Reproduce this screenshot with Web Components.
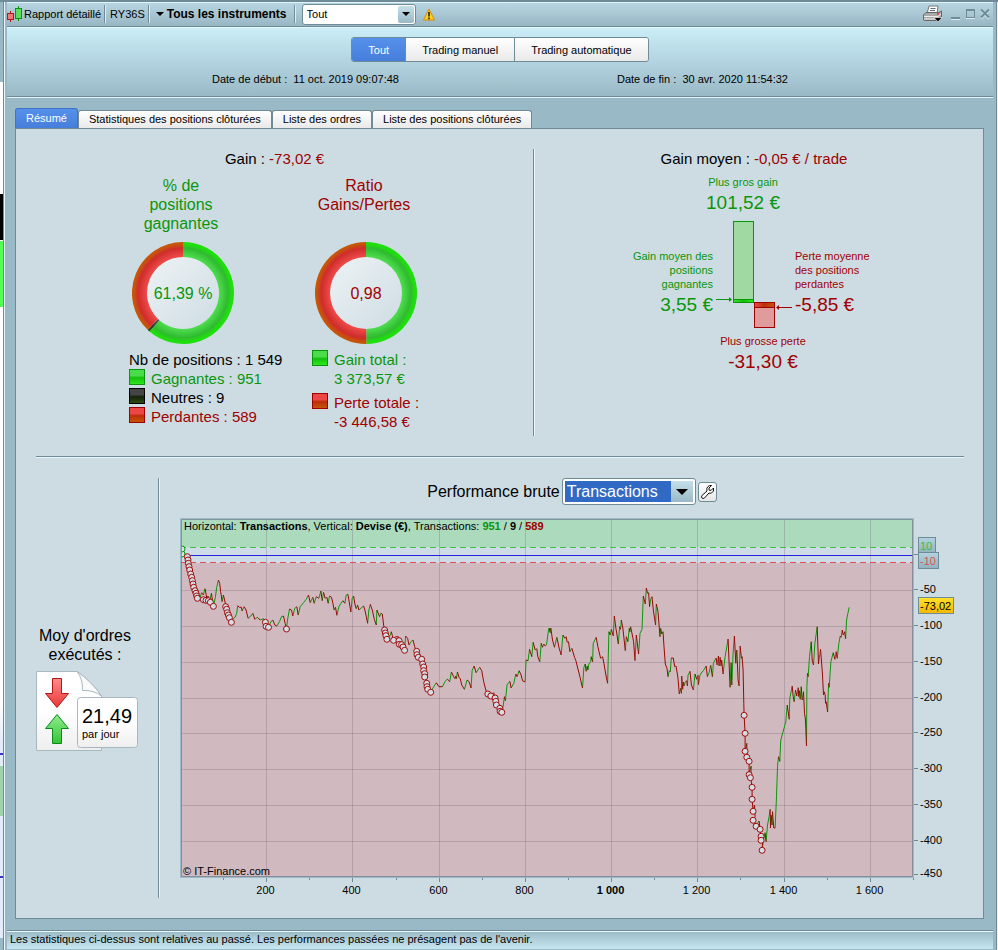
<!DOCTYPE html>
<html lang="fr">
<head>
<meta charset="utf-8">
<title>Rapport détaillé</title>
<style>
:root{
  --line:#6f8b98; --frame:#9ab9c6; --panel:#cddce3; --green:#0a960a; --red:#a00000;
  --small:11px; --medium:15px; --head:16px; --large:19px;
}
body{margin:0;font:11px/14px "Liberation Sans",Arial,sans-serif;color:#000;background:#fff}
</style>
</head>
<body>
<report-window>
  <title-bar slot="bar"></title-bar>
  <report-header slot="header"></report-header>
  <tab-strip slot="tabs"></tab-strip>
  <report-panel slot="content">
    <gain-summary slot="left"></gain-summary>
    <average-gain slot="right"></average-gain>
    <order-rate slot="orders"></order-rate>
    <performance-view slot="chart"></performance-view>
  </report-panel>
  <span slot="status">Les statistiques ci-dessus sont relatives au passé. Les performances passées ne présagent pas de l'avenir.</span>
</report-window>

<script>
const define = (name, html, after) => {
  const template = document.createElement('template');
  template.innerHTML = '<style>*{box-sizing:border-box}:host{display:block}button,select{font:inherit;color:inherit;margin:0;border-radius:0}</style>' + html;
  customElements.define(name, class extends HTMLElement {
    constructor() {
      super();
      this.attachShadow({mode: 'open'}).append(template.content.cloneNode(true));
    }
    connectedCallback() { if (after) after(this, this.shadowRoot); }
  });
};

/* Window frame */
define('report-window', `
<style>
:host{display:grid;grid-template-columns:3px minmax(0,1fr) 1px;min-height:100vh;border-top:2px solid var(--line)}
.behind{background:
  linear-gradient(#9ab9c6,#9ab9c6) 0 0/3px 80px no-repeat,
  linear-gradient(#000,#000) 0 192px/3px 46px no-repeat,
  linear-gradient(#5f5,#5f5) 0 239px/3px 66px no-repeat,
  linear-gradient(#33c,#33c) 0 751px/3px 2px no-repeat,
  linear-gradient(#9fd3ac,#9fd3ac) 0 764px/3px 50px no-repeat,
  linear-gradient(#33c,#33c) 0 874px/3px 2px no-repeat,
  linear-gradient(#9ab9c6,#9ab9c6) 0 936px/3px 12px no-repeat,
  linear-gradient(#fff 700px,#e3ecfc 740px)}
.edge{background:#eaf2f5}
.window{display:flex;flex-direction:column;background:var(--frame);border:solid var(--line);border-width:0 1px;box-shadow:inset 1px 0 #eaf6fa}
.inner{flex:1;display:flex;flex-direction:column;margin:0 3px 3px 3px}
.body{padding:11px 9px 11px 8px;display:flex;flex-direction:column;flex:1}
.body ::slotted(report-panel){flex:1}
footer{border-top:1px solid var(--line);box-shadow:inset 0 1px #e6f6fb;background:linear-gradient(#9ab9c6,#c6e8f3);padding:1px 3px 3px}
</style>
<div class="behind"></div>
<div class="window"><div class="inner">
  <slot name="bar"></slot><slot name="header"></slot>
  <main class="body"><slot name="tabs"></slot><slot name="content"></slot></main>
  <footer><slot name="status"></slot></footer>
</div></div>
<div class="edge"></div>`);

/* Drop-down with a shaded arrow button */
const dropdown = (id, label, options) => `
<span class="drop"><select id="${id}" aria-label="${label}">${options.map(o => `<option>${o}</option>`).join('')}</select>
<span class="arrow"><svg width="12" height="6" viewBox="0 0 12 6"><path d="M0 0H12L6 6Z"/></svg></span></span>`;
const dropStyle = `
.drop{display:inline-grid;grid-template-columns:minmax(0,1fr) auto;border:1px solid var(--line);border-radius:3px;background:#fff;padding:2px}
.drop select{grid-area:1/1/2/3;appearance:none;border:0;outline:0;background:none;width:100%}
.drop .arrow{grid-area:1/2;display:grid;place-items:center;background:linear-gradient(#c4e0ea,#9ab9c6);pointer-events:none}`;

define('title-bar', `
<style>
:host{display:flex;align-items:center;height:24px;border-bottom:1px solid var(--line);box-shadow:inset 0 1px #e0f2f8;background:linear-gradient(#b8d7e3,#98b6c3);padding-right:2px}
.sep{width:2px;height:18px;border-left:1px solid var(--line);border-right:1px solid #dcedf3;margin:0 4px 0 3px}
button{border:0;background:none;padding:0;display:flex;align-items:center;white-space:nowrap}
.title{margin-left:2px}
.all{font-size:12px;font-weight:bold;gap:3px;margin:0 4px 0 2px}
.push{flex:1}
${dropStyle}
.drop{width:114px;height:21px;margin:0 7px 0 2px;padding:1px}
.drop select{padding:0 3px}.drop .arrow{width:16px;border-radius:2px}.drop svg{width:8px;height:4px}
.tools{display:flex;align-items:center;gap:4px}
svg{display:block}
</style>
<svg width="15" height="18" viewBox="0 0 15 18"><path d="M3.500 6v11" stroke="#b01818"/><rect x=".5" y="8.500" width="6" height="6" fill="#f07878" stroke="#b01818"/><path d="M11.500 1v15" stroke="#0a960a"/><rect x="8.500" y="3.500" width="6" height="10" fill="#5be05b" stroke="#0a960a"/></svg>
<span class="title">Rapport détaillé</span><span class="sep"></span>
<span>RY36S</span><span class="sep"></span>
<button class="all"><svg width="8" height="4" viewBox="0 0 8 4"><path d="M0 0H8L4 4Z"/></svg>Tous les instruments</button>
<span class="sep"></span>
${dropdown('kind', 'Type', ['Tout'])}
<svg width="12" height="13" viewBox="0 0 12 13" role="img" aria-label="Avertissement"><path d="M6 1L11.500 12H.5Z" fill="#ffd21a" stroke="#d88a08" stroke-linejoin="round"/><path d="M6 4v4.500M6 9.500v1.700" stroke="#222" stroke-width="1.600"/></svg>
<span class="push"></span>
<div class="tools">
<button aria-label="Imprimer"><svg width="20" height="18" viewBox="0 0 20 18"><path d="M6 1h9l-1 8H4Z" fill="#fff" stroke="#777"/><path d="M7.500 3.500h5M7 5.500h5" stroke="#667"/><path d="M3 7.500H16L18.500 6V12L16 15.500H1.500Q.5 15.500.5 14V10Z" fill="#a9a9a9" stroke="#666"/><path d="M1 11.500H15L18 9M1 14H15" stroke="#eee" fill="none"/><circle cx="15" cy="9" r="1" fill="#e33"/><path d="M11 12.500h8l-4 4.500Z" stroke="#fff" stroke-width=".6"/></svg></button>
<button aria-label="Réduire"><svg width="13" height="14" viewBox="0 0 13 14"><path d="M4 11h9" stroke="#6f8b98" stroke-width="2"/><path d="M4 12.500h9" stroke="#dcedf3"/></svg></button>
<button aria-label="Agrandir"><svg width="12" height="14" viewBox="0 0 12 14"><path d="M2 11.500h9" stroke="#dcedf3"/><rect x="2.500" y="2.500" width="8" height="8" fill="none" stroke="#6f8b98"/><path d="M2 3h9" stroke="#6f8b98" stroke-width="2"/></svg></button>
<button aria-label="Fermer"><svg width="11" height="14" viewBox="0 0 11 14"><path d="M1 3.500l8 8M9 3.500l-8 8" stroke="#dcedf3" stroke-width="2"/><path d="M1 2.500l8 8M9 2.500l-8 8" stroke="#6f8b98" stroke-width="2"/></svg></button>
</div>`);

define('report-header', `
<style>
:host{background:linear-gradient(#cbeef9,#9ab9c6);padding:10px 0;border-bottom:1px solid var(--line);box-shadow:inset 0 1px #e4f7fc,0 1px #e4f4f9;display:flex;flex-direction:column;align-items:center;gap:10px}
.modes{display:flex;border:1px solid var(--line);border-radius:3px;overflow:hidden}
.modes button{height:23px;border:0;background:linear-gradient(#fff,#e9e9e9);padding:0 16px}
.modes button+button{border-left:1px solid var(--line)}
.modes .on{background:linear-gradient(#5590ea,#467fdb);color:#fff}
.dates{display:flex;gap:218px}
.dates span{white-space:pre}
</style>
<div class="modes"><button class="on">Tout</button><button>Trading manuel</button><button>Trading automatique</button></div>
<div class="dates"><span>Date de début :  11 oct. 2019 09:07:48</span><span>Date de fin :  30 avr. 2020 11:54:32</span></div>`);

define('tab-strip', `
<style>
:host{display:flex;align-items:flex-end;height:20px}
button{height:18px;border:1px solid var(--line);border-bottom:0;border-radius:3px 3px 0 0;background:linear-gradient(#fff,#e9e9e9);padding:0 10px 1px;white-space:nowrap}
button[aria-selected=true]{height:20px;background:linear-gradient(#5590ea,#467fdb);color:#fff;border-color:#3f73c6}
</style>
<button role="tab" aria-selected="true">Résumé</button><button role="tab">Statistiques des positions clôturées</button><button role="tab">Liste des ordres</button><button role="tab">Liste des positions clôturées</button>`);

define('report-panel', `
<style>
:host{background:var(--panel);border:1px solid var(--line);padding:0 19px 0 20px;display:flex;flex-direction:column}
.top{display:grid;grid-template-columns:497fr 1px 430fr;padding:20px 0;min-height:327px}
.v{border-left:1px solid var(--line);box-shadow:1px 0 #e8f4f8}
hr{width:100%;margin:0;border:0;border-top:1px solid var(--line);box-shadow:0 1px #e8f4f8;height:1px}
.low{display:grid;grid-template-columns:102px 1px minmax(0,1fr);column-gap:20px;padding:21px 0 20px;flex:1}
</style>
<section class="top"><slot name="left"></slot><span class="v"></span><slot name="right"></slot></section>
<hr>
<section class="low"><slot name="orders"></slot><span class="v"></span><slot name="chart"></slot></section>`);

/* Ring gauge: attribute "parts" holds share:colour pairs */
const ringPalette = {
  win: ['#4fdc4f', '#2fbb2f', '#1fe00c'],
  flat: ['#555', '#333', '#2b4a10'],
  loss: ['#ee4a4a', '#cf2c2c', '#c6540a']
};
define('ring-gauge', `
<style>
:host{width:102px;height:102px;display:grid;place-items:center;font-size:var(--head)}
svg,slot{grid-area:1/1}slot{display:block;white-space:nowrap}
</style><svg width="102" height="102" viewBox="0 0 102 102"></svg><slot></slot>`, (host, root) => {
  const gradients = Object.entries(ringPalette).map(([key, [a, b, c]]) =>
    `<radialGradient id="${key}" gradientUnits="userSpaceOnUse" cx="51" cy="51" r="51"><stop offset=".71" stop-color="${a}"/><stop offset=".88" stop-color="${b}"/><stop offset=".96" stop-color="${c}"/></radialGradient>`).join('');
  let at = 0;
  const point = (t, r) => `${51 + r * Math.sin(2 * Math.PI * t)} ${51 - r * Math.cos(2 * Math.PI * t)}`;
  const arcs = host.getAttribute('parts').split(' ').map(part => {
    const [key, share] = part.split(':');
    const end = at + Number(share), big = share > .5 ? 1 : 0;
    const d = `M${point(at, 51)}A51 51 0 ${big} 1 ${point(end, 51)}L${point(end, 36)}A36 36 0 ${big} 0 ${point(at, 36)}Z`;
    at = end;
    return `<path d="${d}" fill="url(#${key})"/>`;
  }).join('');
  root.querySelector('svg').innerHTML = `<defs>${gradients}<linearGradient id="glass" x2="1" y2="1"><stop stop-color="#eef3f5"/><stop offset="1" stop-color="#cddce3"/></linearGradient></defs><circle cx="51" cy="51" r="37" fill="url(#glass)"/>${arcs}`;
});

define('legend-item', `
<style>
:host{display:grid;grid-template-columns:16px auto;justify-content:start;column-gap:6px;white-space:nowrap;line-height:19px;color:var(--red)}
i{width:16px;height:16px;border:1px solid #a00000;background:linear-gradient(#ec4646 40%,#bb2f08 55%,#c6540a)}
:host([kind=win]){color:var(--green)}:host([kind=win]) i{border-color:#0a960a;background:linear-gradient(#4bdc4b 40%,#14c00c 55%,#2ce81c)}
:host([kind=flat]){color:#000}:host([kind=flat]) i{border-color:#000;background:linear-gradient(#444 40%,#15230a 55%,#2b4a10)}
</style><i></i><span><slot></slot></span>`);

define('gain-summary', `
<style>
:host{font-size:var(--medium);line-height:19px;text-align:center;padding-right:20px}
.red{color:var(--red)}.green{color:var(--green)}
.pair{display:grid;grid-template-columns:108px 108px;justify-content:center;column-gap:75px;margin-top:8px}
.head{min-height:57px;margin-bottom:9px;padding-right:4px;font-size:var(--head)}
ring-gauge{margin:0 auto 6px}
.legend{text-align:left;white-space:nowrap}
legend-item+legend-item.apart{margin-top:5px}
</style>
<div>Gain : <span class="red">-73,02 €</span></div>
<div class="pair">
  <div><div class="head green">% de<br>positions<br>gagnantes</div>
    <ring-gauge class="green" parts="win:.614 flat:.008 loss:.378">61,39 %</ring-gauge>
    <div class="legend"><div>Nb de positions : 1 549</div><legend-item kind="win">Gagnantes : 951</legend-item><legend-item kind="flat">Neutres : 9</legend-item><legend-item kind="loss">Perdantes : 589</legend-item></div></div>
  <div><div class="head red">Ratio<br>Gains/Pertes</div>
    <ring-gauge class="red" parts="win:.499 loss:.501">0,98</ring-gauge>
    <div class="legend"><legend-item kind="win">Gain total :<br>3 373,57 €</legend-item><legend-item class="apart" kind="loss">Perte totale :<br>-3 446,58 €</legend-item></div></div>
</div>`);

define('average-gain', `
<style>
:host{text-align:center;padding-left:10px}
.title{font-size:var(--medium);line-height:19px;margin-bottom:7px}
.red{color:var(--red)}.green{color:var(--green)}
b{display:block;font-weight:normal;font-size:var(--large);line-height:22px;margin-top:3px;white-space:nowrap}
.best{padding-right:22px;margin-bottom:7px}.worst{padding-left:18px;margin-top:5px}
.mid{display:grid;grid-template-columns:1fr 78px 1fr;column-gap:2px}
.mid>div{padding-top:28px}.mid .green{text-align:right}.mid .red{text-align:left}
svg{display:block}
</style>
<div class="title">Gain moyen : <span class="red">-0,05 € / trade</span></div>
<div class="best green">Plus gros gain<b>101,52 €</b></div>
<div class="mid">
  <div class="green">Gain moyen des<br>positions<br>gagnantes<b>3,55 €</b></div>
  <svg width="78" height="108" viewBox="0 0 78 108">
    <defs><linearGradient id="g"><stop stop-color="#3fd83f"/><stop offset=".5" stop-color="#14c00c"/><stop offset="1" stop-color="#2ce81c"/></linearGradient><linearGradient id="r"><stop stop-color="#ec4646"/><stop offset=".5" stop-color="#bb2f08"/><stop offset="1" stop-color="#c6540a"/></linearGradient></defs>
    <rect x="18.500" y=".5" width="20" height="81" fill="#a0daa2" stroke="#0a960a"/><rect x="18.500" y="78.500" width="20" height="3" fill="url(#g)" stroke="#0a960a"/>
    <rect x="39.500" y="81.500" width="20" height="25" fill="#e09c9c" stroke="#a00000"/><rect x="39.500" y="81.500" width="20" height="5" fill="url(#r)" stroke="#a00000"/>
    <path d="M1 78.500h14" stroke="#0a960a"/><path d="M14 76l3 2.500-3 2.500Z" fill="#0a960a"/>
    <path d="M62 86.500h15" stroke="#a00000"/><path d="M64 84l-3 2.500 3 2.500Z" fill="#a00000"/>
  </svg>
  <div class="red">Perte moyenne<br>des positions<br>perdantes<b>-5,85 €</b></div>
</div>
<div class="worst red">Plus grosse perte<b>-31,30 €</b></div>`);

define('order-rate', `
<style>
:host{align-self:center;text-align:center;font-size:var(--head);line-height:19px;padding-top:1px}
.card{display:grid;grid-template-columns:102px;margin-top:7px}
.card>*{grid-area:1/1}
.label{padding-right:4px;white-space:nowrap}
.value{text-align:left;padding:35px 0 0 46px;font-size:20px;line-height:20px}
small{display:block;font-size:var(--small);line-height:16px}
svg{display:block}
</style>
<div class="label">Moy d'ordres<br>exécutés :</div>
<div class="card">
<svg width="102" height="80" viewBox="0 0 102 80">
<defs><linearGradient id="p" x2="0" y2="1"><stop offset=".5" stop-color="#fff"/><stop offset="1" stop-color="#eee"/></linearGradient><linearGradient id="d" x2="0" y2="1"><stop stop-color="#ff8a8a"/><stop offset="1" stop-color="#e83838"/></linearGradient><linearGradient id="u" x2="0" y2="1"><stop stop-color="#8fec8f"/><stop offset="1" stop-color="#35c435"/></linearGradient></defs>
<path d="M.5.500H41Q56 11 65.500 25V79.500H.5Z" fill="url(#p)" stroke="#a9b8c0"/>
<path d="M41 .5Q47 8 46.500 19.500Q58 19 65.500 25Q56 11 41 .5Z" fill="#fafafa" stroke="#a9b8c0"/>
<path d="M16.500 7.500h9v15h7L21 36.500 9.500 22.500h7Z" fill="url(#d)" stroke="#b01818"/>
<path d="M16.500 72.500h9v-15h7L21 43.500 9.500 57.500h7Z" fill="url(#u)" stroke="#0a8a1a"/>
<rect x="41.500" y="26.500" width="60" height="50" rx="3" fill="url(#p)" stroke="#a9b8c0"/>
</svg>
<div class="value">21,49<small>par jour</small></div>
</div>`);

define('performance-view', `
<style>
:host{display:flex;flex-direction:column;min-width:0;margin-left:1px}
.bar{display:flex;justify-content:center;align-items:center;height:27px;margin-bottom:13px;font-size:var(--head);gap:2px}
${dropStyle}
.drop{width:134px;height:27px}.drop select{background:#316ac5;color:#fff;padding:0 2px}.drop select option{background:#fff;color:#000}.drop .arrow{width:22px}
button{width:19px;height:20px;border:1px solid var(--line);border-radius:3px;background:linear-gradient(#fff,#e6e6e6);padding:0;display:grid;place-items:center}
</style>
<div class="bar"><label for="axis">Performance brute</label>${dropdown('axis', 'Performance brute', ['Transactions'])}
<button aria-label="Réglages"><svg width="15" height="16" viewBox="0 0 15 16"><path d="M11.500 1.500L9 4V6L11 6.500 13.500 4Q14.500 7.500 11.500 9 10 9.500 9 9L4.500 14Q3 15 2 14 1 13 2 11.500L7 7Q6 4 8 2.500 9.500 1 11.500 1.500Z" fill="#fff" stroke="#111"/></svg></button></div>
<equity-chart></equity-chart>`);

/* Curve vertices and drawdown marks, three units per pixel, on a plot 732 pixels wide */
const shift = (dx, dy, text) => text.trim().split(/\s+/).map(p => {
  const [x, y] = p.split(',').map(Number);
  return [dx + x / 3, dy + y / 3];
});
const curve = [
  ...shift(-10, -8, `36,118 42,130 52,140 58,170 64,200 70,225 78,245 84,265 90,262 95,248 100,255 105,236 110,262 114,258 118,275 124,250 130,288 136,262 140,232 145,210 149,220 152,245 156,275 160,255 168,290 176,322 184,337 190,325 195,322 200,310 203,287 208,292 214,292 216,303 222,290 228,300 234,325 242,318 248,310 254,328 262,322 270,330 280,326 286,340 295,352 302,335 308,330 314,345 320,348 328,335 334,320 340,318 345,340 349,357 352,330 358,297 364,300 368,318 374,295 380,290 384,315 390,290 400,278 408,268 415,255 420,278 428,262 432,280 438,260 446,265 452,243 456,272 460,247 465,265 470,262 474,280 478,258 484,262 488,280 492,300 496,292 500,316 506,290 512,280 518,272 524,280 528,255 533,253 537,275 542,306 546,265 550,258 554,282 558,296 562,285 566,300 572,295 580,288 584,300 588,320 592,340 596,300 600,283 606,300 612,328 618,345 620,300 628,320 632,310 636,312 640,345 644,360 650,388 660,375 663,365 666,376 668,390 676,380 684,380 686,405 695,405 703,420 706,378 712,385 716,405 722,395 728,390 733,410 738,425 742,440 753,448 758,465 764,500 768,525 772,540 781,547 790,530 798,518 806,530 816,530 824,515 830,508`),
  ...shift(190, 42, `232,358 238,365 243,336 250,350 254,356 256,348 258,356 261,336 266,352 270,357 274,375 282,388 290,360 296,365 302,384 305,332 311,318 317,338 328,322 334,332 340,365 346,390 352,402 362,408 370,398 376,432 388,445 394,457 398,440 402,410 405,422 410,374 418,364 422,384 430,370 436,342 440,350 446,332 452,345 456,362 464,366 467,300 473,302 477,268 484,290 488,247 494,270 499,266 502,290 508,305 512,250 516,262 520,252 524,258 528,255 534,210 536,204 539,218 541,204 546,240 552,262 559,232 566,265 572,285 577,225 583,235 587,230 590,247 594,245 598,275 604,265 612,292 616,302 620,318 628,350 636,384 640,322 644,312 647,334 650,318 652,330 655,312 660,305 662,290 666,305 668,250 677,232 682,260 690,295 696,290 700,310 706,345 711,370 715,215 719,225 722,208 728,228 731,168 736,205 739,222 743,252 747,200 750,208 752,180 757,205 764,272 767,230 772,245 776,205 778,215 780,200 785,225 789,245 793,302 797,225 804,282 808,220 814,208 818,108 824,132`),
  ...shift(420, 42, `137,84 141,100 144,98 147,140 150,118 154,110 158,150 165,195 167,132 172,155 178,230 180,205 183,222 187,215 190,260 194,312 199,325 202,350 206,332 209,335 212,294 218,294 222,320 226,318 228,330 232,355 236,402 240,385 242,400 243,348 246,388 248,366 250,378 254,365 258,362 260,378 262,346 268,334 272,375 278,390 283,342 288,358 292,346 293,374 298,345 304,336 308,332 316,318 320,350 325,338 330,316 335,350 338,310 346,294 349,315 353,288 355,318 358,292 361,318 363,300 367,342 373,290 382,237 388,382 391,308 393,375 397,280 401,228 405,310 408,270 412,360 415,378 418,258 422,295 424,290 427,330 429,430 430,466 433,520 433,574 438,550 438,592 445,604 445,640 451,618 450,655 454,682 454,718 457,754 461,735 463,770 458,781 465,799 475,783 478,808 480,829 485,850 484,870 488,840 493,818 496,845 500,795 505,770 508,748 509,804 511,765 514,795 515,755 517,780 519,804 523,804 527,710 530,620 533,590 537,604 540,540 546,518 555,485 559,435 565,478 567,415 574,378 577,410 580,425 584,390 588,408 592,383 594,410 596,392 598,418 601,380 604,420 608,395 611,460 614,480 617,558 618,380 620,340 622,350 626,290 631,245 634,300 638,315 642,250 649,200 653,312 659,268 661,292 665,345 668,405 670,395 673,405 674,430 676,425 680,456 683,370 685,382 690,305 697,278 702,298 706,275 709,295 714,250 718,228 721,232 724,210 727,225 731,215 734,236 737,180 741,160 745,142`)
];
const marks = [
  ...shift(-10, -8, `52,140 54,150 55,160 57,170 59,180 62,192 65,202 67,212 69,222 71,232 75,242 78,250 80,258 82,265 100,269 108,271 115,272 121,277 130,289 167,290 170,298 172,308 175,315 178,323 184,337 286,337 288,349 295,352 349,357 643,360 645,369 647,377 650,388 670,391 686,392 687,403 694,404 698,411 703,421 739,424 740,434 744,442 754,448 757,462 760,471 760,482 763,491 763,501 769,520 770,530 772,538 781,547`),
  ...shift(190, 42, `352,402 361,408 374,414 376,424 378,435 388,445 389,454 394,457`),
  ...shift(420, 42, `430,466 433,520 433,574 438,592 445,604 445,644 449,653 454,682 454,718 457,754 457,781 466,799 478,808 481,829 481,841 484,871`)
];

define('equity-chart', `<style>:host{height:380px}svg{display:block;width:100%;height:100%;font-size:11px;overflow:visible}.b{font-weight:bold}</style><svg role="img" aria-label="Performance brute"></svg>`, (host, root) => {
  const svg = root.querySelector('svg');
  const draw = () => {
    const w = Math.max(200, host.clientWidth - 51), h = 359;
    const k = w / 732;
    const nx = n => Math.round(n * .4305 * k) + .5;
    const vy = v => Math.round(36.6 - v * .715) + .5;
    let s = `<defs><linearGradient id="tag" x2="0" y2="1"><stop stop-color="#b4d3e0"/><stop offset="1" stop-color="#93b1bf"/></linearGradient><linearGradient id="gold" x2="0" y2="1"><stop stop-color="#ffe12c"/><stop offset="1" stop-color="#f5b800"/></linearGradient><clipPath id="clip"><rect x="1" y="1" width="${w - 1}" height="${h - 1}"/></clipPath></defs>
    <rect width="${w}" height="29" fill="#abdabd"/><rect y="29" width="${w}" height="16" fill="#cddce6"/><rect y="45" width="${w}" height="${h - 45}" fill="#d0bac0"/>`;
    for (let n = 200; n < 1700; n += 200) s += `<path d="M${nx(n)} 1V${h}" stroke="#6e5a6e" stroke-opacity=".28"/>`;
    for (let v = -50; v > -450; v -= 50) s += `<path d="M1 ${vy(v)}H${w}" stroke="#6e5a6e" stroke-opacity=".28"/>`;
    s += `<path d="M0 29.500H${w}" stroke="#3fc43f" stroke-dasharray="6 4"/><path d="M0 44.500H${w}" stroke="#e05050" stroke-dasharray="6 4"/><path d="M0 37.500H${w}" stroke="#2222d8"/>`;
    const steps = {up: '', down: ''};
    for (let i = 1; i < curve.length; i++) {
      const [x0, y0] = curve[i - 1], [x1, y1] = curve[i];
      steps[y1 < y0 ? 'up' : 'down'] += `M${(x0 * k).toFixed(1)} ${y0.toFixed(1)}L${(x1 * k).toFixed(1)} ${y1.toFixed(1)}`;
    }
    s += `<g clip-path="url(#clip)" fill="none"><path d="${steps.up}" stroke="#0a960a"/><path d="${steps.down}" stroke="#9c0606"/>
    ${[[2, 36], [2, 31]].map(([x, y]) => `<circle cx="${x}" cy="${y}" r="3" fill="#d3e4e4" stroke="#0a960a"/>`).join('')}
    ${marks.map(([x, y]) => `<circle cx="${(x * k).toFixed(1)}" cy="${y.toFixed(1)}" r="3" fill="#d3dde4" stroke="#a00c0c"/>`).join('')}</g>
    <rect x=".5" y=".5" width="${w}" height="${h}" fill="none" stroke="#9bbac7"/><path d="M1.500 ${h - .5}V1.500H${w - .5}V${h - .5}Z" fill="none" stroke="#78828e" stroke-opacity=".8"/>
    <text x="4" y="12">Horizontal: <tspan class="b">Transactions</tspan>, Vertical: <tspan class="b">Devise (€)</tspan>, Transactions: <tspan class="b" fill="#0a960a">951</tspan> / <tspan class="b">9</tspan> / <tspan class="b" fill="#a00000">589</tspan></text>
    <text x="3" y="357">© IT-Finance.com</text>`;
    for (let n = 100; n <= 1700; n += 100) {
      const major = n % 200 === 0;
      s += `<path d="M${nx(n)} ${h + 1}v${major ? 4 : 2}" stroke="#6f8b98"/>`;
      if (major) s += `<text x="${nx(n) - 1}" y="376" text-anchor="middle"${n === 1000 ? ' class="b"' : ''}>${String(n).replace(/(\d)(\d{3})$/, '$1 $2')}</text>`;
    }
    for (let v = 0; v >= -450; v -= 50) {
      const y = v === -450 ? h - 2 : vy(v) - .5;
      s += `<path d="M${w + 1} ${y - .5}h4" stroke="#6f8b98"/>`;
      if (v) s += `<text x="${w + 7}" y="${v === -450 ? y + 2 : y + 3}">${v}</text>`;
    }
    s += `<rect x="${w + 5.5}" y="19.500" width="17" height="15" fill="url(#tag)" stroke="#6f8b98"/><text x="${w + 7}" y="32" fill="#35c435">10</text>
    <rect x="${w + 5.5}" y="34.500" width="20" height="16" fill="url(#tag)" stroke="#6f8b98"/><text x="${w + 7}" y="47" fill="#e05050">-10</text>
    <rect x="${w + 5.5}" y="79.500" width="35" height="16" fill="url(#gold)" stroke="#6f8b98"/><text x="${w + 7}" y="92">-73,02</text>`;
    svg.innerHTML = s;
  };
  draw();
  new ResizeObserver(draw).observe(host);
});
</script>
</body>
</html>
